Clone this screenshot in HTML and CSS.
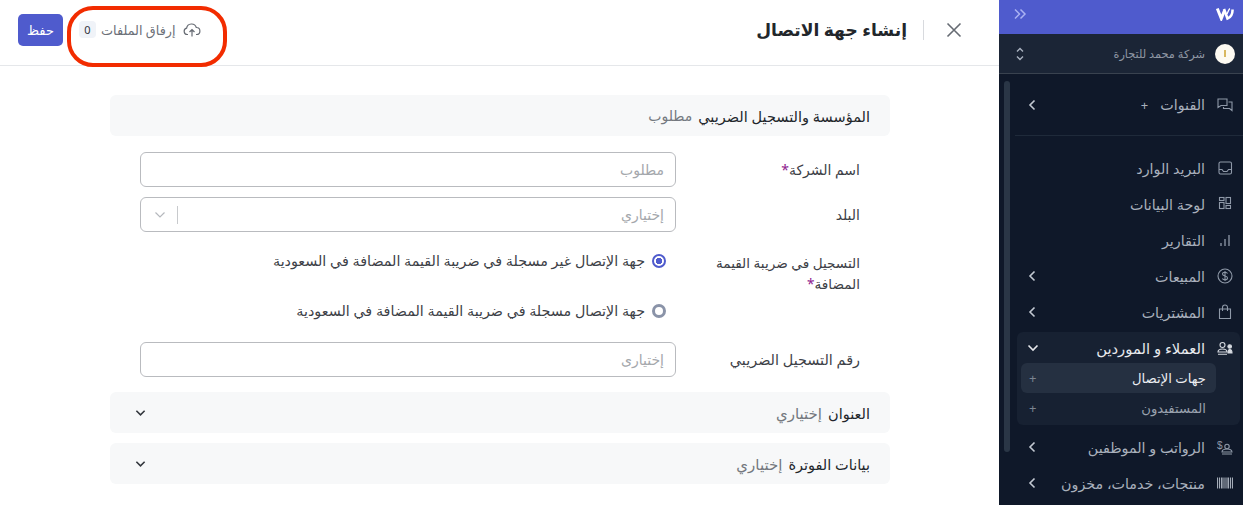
FILE: index.html
```html
<!DOCTYPE html>
<html lang="ar" dir="rtl">
<head>
<meta charset="utf-8">
<title>إنشاء جهة الاتصال</title>
<link rel="stylesheet" href="styles.css">
</head>
<body>
<div class="app">
  <aside class="sidebar">
    <div class="brand">
      <svg class="logo" width="18" height="14" viewBox="0 0 18 14" fill="none" stroke="#fff"><path d="M1.300 1.500 5.300 11.500 8.500 3.500" stroke-width="3"/><path d="M8 2 11.500 11.500C14.500 10.500 16.800 7 16.500 2.500" stroke-width="2.600"/><path d="M11 7C12 4.500 12.500 3 13.800 1.500" stroke-width="1.300"/></svg>
      <svg class="collapse" width="14" height="12" viewBox="0 0 14 12" fill="none" stroke="#aab2f2" stroke-width="1.500"><path d="M2 1.500 6.500 6 2 10.500M7.500 1.500 12 6l-4.500 4.500"/></svg>
    </div>
    <div class="company">
      <span class="avatar"><span class="avatar-dot"></span></span>
      <span class="company-name">شركة محمد للتجارة</span>
      <svg class="updown" width="10" height="16" viewBox="0 0 10 16" fill="none" stroke="#aab3c0" stroke-width="1.400"><path d="M2 5.500 5 2.500l3 3M2 10.500l3 3 3-3"/></svg>
    </div>
    <div class="nav-scroll">
      <span class="scrollbar"></span>
      <div class="channels">
        <div class="nav-row">
          <svg class="nav-icon" width="16" height="16" viewBox="0 0 16 16" fill="none" stroke="#8f99a8" stroke-width="1.100"><path d="M1 2h9v6.500H4L1 10.500zM11.500 5H15v8.500l-2.500-2H6.500V10"/></svg>
          <span class="nav-label">القنوات</span>
          <span class="nav-plus">+</span>
          <svg class="chev" width="8" height="12" viewBox="0 0 8 12" fill="none" stroke="#c3c9d2" stroke-width="1.600"><path d="M6.500 1.500 2 6l4.500 4.500"/></svg>
        </div>
      </div>
      <nav class="nav-main">
        <div class="nav-row">
          <svg class="nav-icon" width="16" height="16" viewBox="0 0 16 16" fill="none" stroke="#8f99a8" stroke-width="1.100"><rect x="2" y="2" width="12.500" height="12" rx="1.500"/><path d="M2 9.500h3l1.500 2h3.500l1.500-2h3"/></svg>
          <span class="nav-label">البريد الوارد</span>
        </div>
        <div class="nav-row">
          <svg class="nav-icon" width="16" height="16" viewBox="0 0 16 16" fill="none" stroke="#8f99a8" stroke-width="1.100"><rect x="2.500" y="1.500" width="4.500" height="3"/><rect x="9" y="1.500" width="4.500" height="6"/><rect x="2.500" y="6.500" width="4.500" height="6"/><rect x="9" y="9.500" width="4.500" height="3"/></svg>
          <span class="nav-label">لوحة البيانات</span>
        </div>
        <div class="nav-row">
          <svg class="nav-icon" width="16" height="16" viewBox="0 0 16 16" fill="none" stroke="#8f99a8" stroke-width="1.300"><path d="M4 14v-3M8 14V7M12 14V3"/></svg>
          <span class="nav-label">التقارير</span>
        </div>
        <div class="nav-row">
          <svg class="nav-icon" width="16" height="16" viewBox="0 0 16 16" fill="none" stroke="#8f99a8" stroke-width="1.100"><circle cx="8" cy="8" r="7"/><path d="M10.500 5.500C10 4.500 9 4.200 8 4.200c-1.500 0-2.500.8-2.500 1.900C5.500 8.800 10.500 7.200 10.500 9.900c0 1.100-1 1.900-2.500 1.900-1.200 0-2.100-.4-2.600-1.400M8 3v10"/></svg>
          <span class="nav-label">المبيعات</span>
          <svg class="chev" width="8" height="12" viewBox="0 0 8 12" fill="none" stroke="#c3c9d2" stroke-width="1.600"><path d="M6.500 1.500 2 6l4.500 4.500"/></svg>
        </div>
        <div class="nav-row">
          <svg class="nav-icon" width="16" height="16" viewBox="0 0 16 16" fill="none" stroke="#8f99a8" stroke-width="1.100"><path d="M2.500 5h11v9.500h-11zM5.500 7V3.500a2.500 2.500 0 0 1 5 0V7"/></svg>
          <span class="nav-label">المشتريات</span>
          <svg class="chev" width="8" height="12" viewBox="0 0 8 12" fill="none" stroke="#c3c9d2" stroke-width="1.600"><path d="M6.500 1.500 2 6l4.500 4.500"/></svg>
        </div>
        <div class="nav-group">
          <div class="nav-row nav-row-open">
            <svg class="nav-icon" width="16" height="16" viewBox="0 0 16 16" fill="none" stroke="#d6dae0" stroke-width="1.100"><circle cx="5.500" cy="5" r="2.500"/><path d="M1 12c0-2 2-3 4.500-3s4.500 1 4.500 3zM1 14.300h9"/><circle cx="12.700" cy="6.500" r="1.800" fill="#d6dae0"/><path d="M11 13c0-2 .4-3.500 1.800-3.500S15 10.700 15 13z" fill="#d6dae0"/></svg>
            <span class="nav-label">العملاء و الموردين</span>
            <svg class="chev-open" width="12" height="8" viewBox="0 0 12 8" fill="none" stroke="#e6e8ec" stroke-width="1.600"><path d="M1.500 1.500 6 6l4.500-4.500"/></svg>
          </div>
          <div class="sub-row sub-active"><span>جهات الإتصال</span><span class="sub-plus">+</span></div>
          <div class="sub-row"><span>المستفيدون</span><span class="sub-plus">+</span></div>
        </div>
        <div class="nav-row">
          <svg class="nav-icon icon-pay" width="16" height="16" viewBox="0 0 16 16" fill="none" stroke="#8f99a8" stroke-width="1.100"><circle cx="10" cy="7.500" r="2.200"/><path d="M5 13c0-2 2-3 5-3s5 1 5 3zM5 15h10"/><text x="0" y="10" font-size="10" fill="#8f99a8" stroke="none">$</text></svg>
          <span class="nav-label">الرواتب و الموظفين</span>
          <svg class="chev" width="8" height="12" viewBox="0 0 8 12" fill="none" stroke="#c3c9d2" stroke-width="1.600"><path d="M6.500 1.500 2 6l4.500 4.500"/></svg>
        </div>
        <div class="nav-row">
          <svg class="nav-icon" width="16" height="16" viewBox="0 0 16 16" fill="none" stroke="#a4acb8" stroke-width="1.100"><path d="M.5 2.500v11M2.500 2.500v11M4.500 2.500v11M6 2.500v11M8 2.500v11M10 2.500v11M11.500 2.500v11M13.500 2.500v11M15.500 2.500v11"/></svg>
          <span class="nav-label">منتجات، خدمات، مخزون</span>
          <svg class="chev" width="8" height="12" viewBox="0 0 8 12" fill="none" stroke="#c3c9d2" stroke-width="1.600"><path d="M6.500 1.500 2 6l4.500 4.500"/></svg>
        </div>
      </nav>
    </div>
  </aside>
  <main class="main">
    <header class="topbar">
      <button class="close" aria-label="close"><svg width="16" height="16" viewBox="0 0 16 16" fill="none" stroke="#666b73" stroke-width="1.600"><path d="M1.500 1.500l13 13M14.500 1.500l-13 13"/></svg></button>
      <span class="divider"></span>
      <h1 class="title">إنشاء جهة الاتصال</h1>
      <div class="actions">
        <div class="attach">
          <svg class="attach-icon" width="18" height="14" viewBox="0 0 18 14" fill="none" stroke="#666b73" stroke-width="1.200"><path d="M5 11.500H4.200a3.200 3.200 0 0 1-.6-6.300 5 5 0 0 1 9.700-.7 3.500 3.500 0 0 1 .2 7H13M9 13.500V7M6.500 9 9 6.500 11.500 9"/></svg>
          <span>إرفاق الملفات</span>
          <span class="count">0</span>
        </div>
        <button class="save">حفظ</button>
      </div>
    </header>
    <div class="form">
      <section class="section-head"><b>المؤسسة والتسجيل الضريبي</b><span>مطلوب</span></section>
      <div class="field">
        <label>اسم الشركة<i>*</i></label>
        <div class="input"><span>مطلوب</span></div>
      </div>
      <div class="field">
        <label>البلد</label>
        <div class="input select"><span>إختياري</span><span class="select-end"><svg width="12" height="8" viewBox="0 0 12 8" fill="none" stroke="#b5b8bd" stroke-width="1.200"><path d="M1.500 1.500 6 6l4.500-4.500"/></svg></span></div>
      </div>
      <div class="field field-radio">
        <label>التسجيل في ضريبة القيمة المضافة<i>*</i></label>
        <div class="radios">
          <div class="radio radio-on"><span class="dot"></span><span>جهة الإتصال غير مسجلة في ضريبة القيمة المضافة في السعودية</span></div>
          <div class="radio"><span class="dot"></span><span>جهة الإتصال مسجلة في ضريبة القيمة المضافة في السعودية</span></div>
        </div>
      </div>
      <div class="field field-tax">
        <label>رقم التسجيل الضريبي</label>
        <div class="input"><span>إختيارى</span></div>
      </div>
      <section class="section-head collapsed"><b>العنوان</b><span>إختياري</span><svg class="down" width="11" height="8" viewBox="0 0 12 8" fill="none" stroke="#33373d" stroke-width="1.700"><path d="M1.500 1.500 6 6l4.500-4.500"/></svg></section>
      <section class="section-head collapsed"><b>بيانات الفوترة</b><span>إختياري</span><svg class="down" width="11" height="8" viewBox="0 0 12 8" fill="none" stroke="#33373d" stroke-width="1.700"><path d="M1.500 1.500 6 6l4.500-4.500"/></svg></section>
    </div>
  </main>
</div>
<div class="annotation"></div>
</body>
</html>
```
FILE: styles.css
```css
* { box-sizing: border-box; }
html, body { margin: 0; height: 100%; }
body {
  font-family: "Noto Sans", "DejaVu Sans", sans-serif;
  background: #fff;
  color: #22262b;
  overflow: hidden;
  position: relative;
}
.app { display: flex; height: 505px; }

.sidebar { width: 244px; flex: none; background: #0f1829; display: flex; flex-direction: column; color: #a9b0bc; overflow: hidden; }
.brand { height: 34px; background: #4f5bcd; display: flex; align-items: center; justify-content: space-between; padding: 0 9px 6px 14px; flex: none; }
.company { height: 40px; background: #1b2536; border-bottom: 1px solid #39424f; display: flex; align-items: center; padding: 0 8px 0 16px; gap: 10px; flex: none; }
.avatar { width: 20px; height: 20px; border-radius: 50%; background: #fdfaf2; display: flex; align-items: center; justify-content: center; }
.avatar-dot { width: 2px; height: 7px; background: #d9b860; }
.company-name { flex: 1; font-size: 11.300px; color: #8f97a4; }
.nav-scroll { position: relative; flex: 1; }
.scrollbar { position: absolute; left: 5px; top: 7px; width: 6px; height: 371px; background: #2a3646; border-radius: 3px; }
.channels { height: 62px; border-bottom: 1px solid #1f2a3a; display: flex; align-items: center; margin-left: 16px; }
.channels .nav-row { width: 100%; padding-left: 13px; }
.nav-main { padding-top: 14px; display: flex; flex-direction: column; }
.nav-row { height: 36px; display: flex; align-items: center; padding: 0 10px 0 29px; font-size: 14.300px; color: #a9b0bc; gap: 12px; flex: none; }
.nav-icon { flex: none; }
.icon-pay { direction: ltr; overflow: visible; }
.icon-pay text { font-family: "Liberation Sans", sans-serif; }
.nav-label { flex: 1; white-space: nowrap; }
.channels .nav-label { flex: none; }
.nav-plus { flex: 1; font-size: 13px; color: #a9b0bc; }
.nav-group { margin: 2px 3px 4px 18px; background: #172132; border-radius: 6px; height: 93px; display: flex; flex-direction: column; flex: none; }
.nav-row-open { height: 31px; padding: 0 7px 0 10px; color: #e8eaee; font-size: 14.800px; }
.sub-row { height: 30px; flex: none; display: flex; align-items: center; justify-content: space-between; margin: 0 24px 0 4px; padding: 0 10px 0 8px; font-size: 13.200px; color: #9aa2ae; }
.sub-active { background: #253041; border-radius: 6px; color: #eceef2; }
.sub-plus { color: #7b8491; font-size: 13px; }

.main { flex: 1; min-width: 0; display: flex; flex-direction: column; }
.topbar { height: 66px; border-bottom: 1px solid #e5e7ea; display: flex; align-items: center; padding: 0 37px 6px 18px; flex: none; }
.close { border: 0; background: none; padding: 0; width: 16px; height: 16px; display: flex; }
.divider { width: 1px; height: 20px; background: #d8dade; margin: 0 22px 0 16px; }
.title { margin: 0; font-size: 17.100px; font-weight: 600; color: #22262b; }
.actions { margin-right: auto; display: flex; align-items: center; gap: 16px; }
.attach { display: flex; align-items: center; gap: 5px; font-size: 12.800px; color: #6b7078; }
.attach-icon { margin-left: 2px; }
.count { width: 17px; height: 17px; background: #f0f3f8; border-radius: 4px; font-size: 11px; color: #33373d; display: flex; align-items: center; justify-content: center; }
.save { border: 0; background: #4f5bcd; color: #fff; border-radius: 5px; width: 45px; height: 32px; font: inherit; font-size: 13px; padding: 0; }

.form { width: 780px; margin: 29px 109px 0 110px; display: flex; flex-direction: column; }
.section-head { height: 41px; background: #f7f8f9; border-radius: 6px; display: flex; align-items: center; padding: 0 20px; gap: 6px; font-size: 14.500px; flex: none; }
.section-head b { font-weight: 500; color: #22262b; }
.section-head span { color: #74787f; font-size: 14px; }
.collapsed { margin-bottom: 10px; }
.collapsed span { font-size: 15px; }
.down { margin-right: auto; margin-left: 5px; }
.field { display: flex; margin: 16px 30px 0 30px; min-height: 35px; font-size: 14px; }
.section-head + .field { margin-top: 16px; }
.field label { width: 184px; flex: none; color: #3d4147; line-height: 22px; padding-top: 7px; }
.field i { font-style: normal; color: #8e1b8e; }
.input { flex: 1; height: 35px; border: 1px solid #b9bbbf; border-radius: 6px; display: flex; align-items: center; padding: 0 11px; color: #a4a7ac; font-size: 14px; justify-content: space-between; }
.field + .field { margin-top: 10px; }
.select-end { display: flex; align-items: center; border-right: 1px solid #c8cacd; height: 18px; padding-right: 11px; margin-left: 2px; }
.field-radio { margin-top: 16px !important; height: 86px; }
.field-radio label { padding-top: 4px; padding-left: 20px; font-size: 13.600px; line-height: 21px; }
.radios { flex: 1; padding-right: 10px; display: flex; flex-direction: column; gap: 28px; }
.radio { display: flex; align-items: center; gap: 7px; color: #3d4147; height: 22px; padding-top: 3px; font-size: 14.300px; white-space: nowrap; }
.dot { width: 14px; height: 14px; border-radius: 50%; border: 3px solid #8a93a8; background: #fff; flex: none; }
.radio-on .dot { border: 2px solid #4f5bcd; background: radial-gradient(circle, #4f5bcd 0 3px, #fff 3.500px); }
.field-tax { margin-top: 8px !important; margin-bottom: 15px; }
.field-tax label { font-size: 14.400px; }

.annotation { position: absolute; left: 67px; top: 6px; width: 160px; height: 61px; border: 4px solid #f22c00; border-radius: 26px; pointer-events: none; }
```
